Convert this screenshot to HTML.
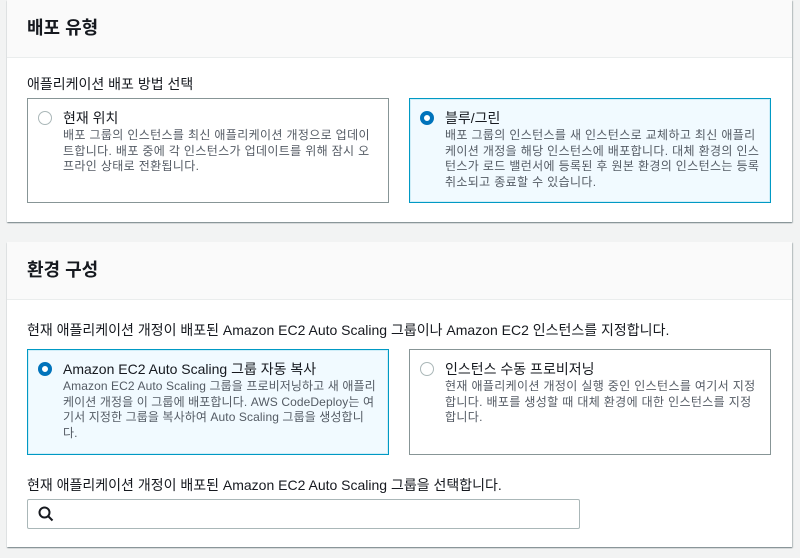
<!DOCTYPE html>
<html><head><meta charset="utf-8"><style>
*{box-sizing:border-box;margin:0;padding:0}
body{width:800px;height:558px;background:#f2f3f3;font-family:"Liberation Sans","Noto Sans CJK KR",sans-serif;color:#16191f;position:relative;overflow:hidden}
.panel{position:absolute;left:7px;width:785px;background:#fff;box-shadow:0 1px 1px rgba(0,28,36,.4),1px 1px 1px rgba(0,28,36,.2);}
.hd{background:#fafafa;border-bottom:1px solid #eaeded;padding-left:20px;font-size:18px;font-weight:bold;}
.lbl{position:absolute;left:20px;font-size:14px;}
.card{position:absolute;width:362px;border:1px solid #879596;padding:9px 10px 0 35px;background:#fff}
.card.sel{border-color:#0099c4;background:#f1faff;box-shadow:0 0 0 1px #d0eef8 inset}
.card .t{font-size:14px;line-height:20px;}
.card .d{font-size:12px;line-height:15.5px;color:#545b64;letter-spacing:0.35px}
.r{position:absolute;left:10px;top:12px;width:14px;height:14px;border-radius:50%;border:1px solid #aab7b8;background:#fff}
.sel .r{border:4px solid #0073bb}
.search{position:absolute;left:20px;top:257px;width:553px;height:30px;border:1px solid #aab7b8;border-radius:2px;background:#fff}
</style></head><body>
<div class="panel" style="top:0;height:222px">
 <div class="hd" style="height:58px;line-height:56px">배포 유형</div>
 <div class="lbl" style="top:74px">애플리케이션 배포 방법 선택</div>
 <div class="card" style="left:20px;top:98px;height:105px"><div class="r"></div><div class="t">현재 위치</div><div class="d">배포 그룹의 인스턴스를 최신 애플리케이션 개정으로 업데이트합니다. 배포 중에 각 인스턴스가 업데이트를 위해 잠시 오프라인 상태로 전환됩니다.</div></div>
 <div class="card sel" style="left:402px;top:98px;height:105px"><div class="r"></div><div class="t">블루/그린</div><div class="d">배포 그룹의 인스턴스를 새 인스턴스로 교체하고 최신 애플리케이션 개정을 해당 인스턴스에 배포합니다. 대체 환경의 인스턴스가 로드 밸런서에 등록된 후 원본 환경의 인스턴스는 등록 취소되고 종료할 수 있습니다.</div></div>
</div>
<div class="panel" style="top:242px;height:305px">
 <div class="hd" style="height:58px;line-height:56px">환경 구성</div>
 <div class="lbl" style="top:78px">현재 애플리케이션 개정이 배포된 Amazon EC2 Auto Scaling 그룹이나 Amazon EC2 인스턴스를 지정합니다.</div>
 <div class="card sel" style="left:20px;top:107px;height:106px"><div class="r"></div><div class="t">Amazon EC2 Auto Scaling 그룹 자동 복사</div><div class="d" style="letter-spacing:0.1px">Amazon EC2 Auto Scaling 그룹을 프로비저닝하고 새 애플리케이션 개정을 이 그룹에 배포합니다. AWS CodeDeploy는 여기서 지정한 그룹을 복사하여 Auto Scaling 그룹을 생성합니다.</div></div>
 <div class="card" style="left:402px;top:107px;height:106px"><div class="r"></div><div class="t">인스턴스 수동 프로비저닝</div><div class="d">현재 애플리케이션 개정이 실행 중인 인스턴스를 여기서 지정합니다. 배포를 생성할 때 대체 환경에 대한 인스턴스를 지정합니다.</div></div>
 <div class="lbl" style="top:233px">현재 애플리케이션 개정이 배포된 Amazon EC2 Auto Scaling 그룹을 선택합니다.</div>
 <div class="search"><svg width="16" height="16" style="position:absolute;left:10px;top:6px" viewBox="0 0 16 16"><circle cx="6.5" cy="6.5" r="5" fill="none" stroke="#16191f" stroke-width="2"/><line x1="10" y1="10" x2="14.5" y2="14.5" stroke="#16191f" stroke-width="2"/></svg></div>
</div>
</body></html>
